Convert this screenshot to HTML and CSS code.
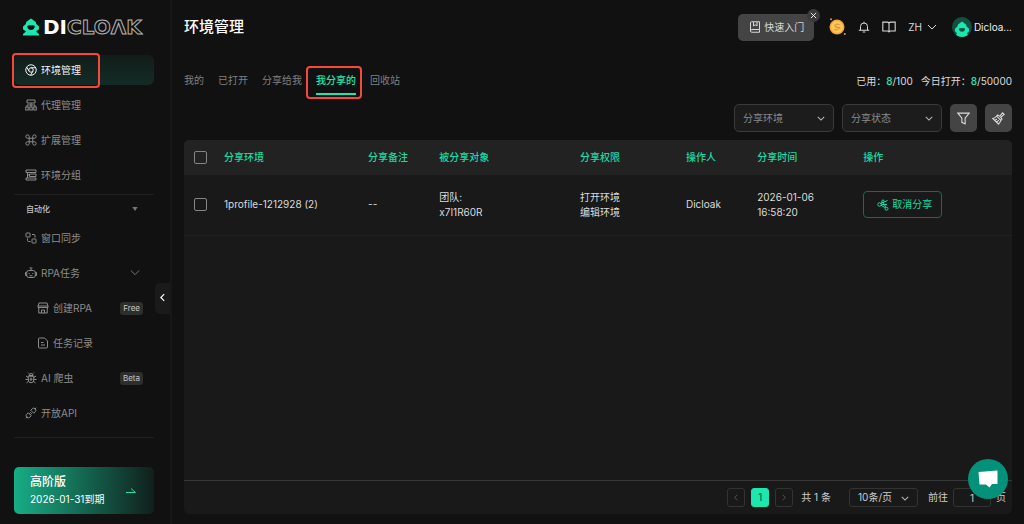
FILE: index.html
```html
<!DOCTYPE html>
<html lang="zh-CN">
<head>
    <meta charset="UTF-8">
    <meta name="viewport" content="width=device-width, initial-scale=1.0">
    <title>环境管理 - DICloak</title>
    <link rel="stylesheet" href="styles.css">
</head>
<body>
    <aside class="sidebar">
        <a href="#" class="logo">
            <svg class="logo-mark" viewBox="0 0 16 18">
                <path fill="#1be7ae" fill-rule="evenodd" d="M8 0.5 L12.8 4 L13.2 6 L16 8.5 V11.2 L13 13.6 L16 16 V17.5 H0 V16 L3 13.6 L0 11.2 V8.5 L2.8 6 L3.2 4 Z M4.2 8 C4.2 10.6 6 12 8 12 S11.8 10.6 11.8 8 C10.6 7 9.4 7.4 8 7.4 S5.4 7 4.2 8 Z"/>
            </svg>
            <span class="logo-text">DI<span class="logo-outline">CLOΛK</span></span>
        </a>

        <nav class="menu">
            <a href="#" class="menu-item active marked">
                <svg class="icon" viewBox="0 0 24 24"><circle cx="12" cy="12" r="10.5"/><circle cx="12" cy="12" r="4.5"/><path d="M12 7.5h9.5M8.2 14.5L3.4 6.2M15.8 14.5l-4.6 8"/></svg>
                环境管理
            </a>
            <a href="#" class="menu-item">
                <svg class="icon" viewBox="0 0 24 24"><path d="M4 2h16v6H4zM12 8v8M4 16v-4h16v4"/><rect x="1.5" y="16" width="5" height="6"/><rect x="9.5" y="16" width="5" height="6"/><rect x="17.5" y="16" width="5" height="6"/></svg>
                代理管理
            </a>
            <a href="#" class="menu-item">
                <svg class="icon" viewBox="0 0 24 24"><path d="M8.5 8.5h7v7h-7zM8.5 8.5V5A3.4 3.4 0 1 0 5 8.5zM15.5 8.5V5A3.4 3.4 0 1 1 19 8.5zM8.5 15.5V19A3.4 3.4 0 1 1 5 15.5zM15.5 15.5V19A3.4 3.4 0 1 0 19 15.5z"/></svg>
                扩展管理
            </a>
            <a href="#" class="menu-item">
                <svg class="icon" viewBox="0 0 24 24"><path d="M2 2h20v5H2zM9 10h13v5H9zM2 18h20v4H2zM5 7v11M5 12h4"/></svg>
                环境分组
            </a>
        </nav>

        <button type="button" class="section-title">
            自动化
            <svg class="caret" viewBox="0 0 8 6"><path d="M0 0h8L4 6z"/></svg>
        </button>

        <nav class="menu">
            <a href="#" class="menu-item">
                <svg class="icon" viewBox="0 0 24 24"><rect x="2" y="2" width="8" height="8" rx="1"/><rect x="14" y="14" width="8" height="8" rx="1"/><path d="M14 5h4q2 0 2 2v4M5 13v4q0 2 2 2h4"/></svg>
                窗口同步
            </a>
            <a href="#" class="menu-item">
                <svg class="icon" viewBox="0 0 24 24"><rect x="3.5" y="7" width="17" height="14" rx="4"/><path d="M12 7V2.5M9 2h6M3.5 11H1v6h2.5M20.5 11H23v6h-2.5M8.5 12v2M15.5 12v2M9 17.5h6"/></svg>
                RPA任务
                <svg class="chevron" viewBox="0 0 12 12"><path d="M1 3l5 5 5-5"/></svg>
            </a>
            <a href="#" class="menu-item sub">
                <svg class="icon" viewBox="0 0 24 24"><path d="M4 2h16l2 6v3H2V8zM3.5 11v11h17V11M2 8h20M9 22v-6h6v6"/></svg>
                创建RPA
                <span class="badge">Free</span>
            </a>
            <a href="#" class="menu-item sub">
                <svg class="icon" viewBox="0 0 24 24"><path d="M5 2h10l6 6v12q0 2-2 2H5q-2 0-2-2V4q0-2 2-2zM8 11h5M8 16h8"/></svg>
                任务记录
            </a>
            <a href="#" class="menu-item">
                <svg class="icon" viewBox="0 0 24 24"><path d="M8 7a4 4 0 0 1 8 0zM6.5 8.5h11V16a5.5 5.5 0 0 1-11 0zM12 11v7M9 14.5h6M6.5 11L2 8M17.5 11L22 8M6.5 15H1M17.5 15H23M7 18.5L3 22M17 18.5l4 3.5M8 3L6 1M16 3l2-2"/></svg>
                AI 爬虫
                <span class="badge">Beta</span>
            </a>
            <a href="#" class="menu-item">
                <svg class="icon" viewBox="0 0 24 24"><path d="M11.5 6.5l6 6 3-3a4.2 4.2 0 0 0-6-6zM19.5 4.5L22.5 1.5M12.5 17.5l-6-6-3 3a4.2 4.2 0 0 0 6 6zM4.5 19.5l-3 3M8.5 13.5l3-3M10.5 15.5l3-3"/></svg>
                开放API
            </a>
        </nav>

        <a href="#" class="plan">
            <span class="plan-info">
                <strong>高阶版</strong>
                <span>2026-01-31到期</span>
            </span>
            <svg class="plan-arrow" viewBox="0 0 10 8"><path d="M0 5.5h9.5L5 1.5"/></svg>
        </a>

        <button type="button" class="collapse" aria-label="收起">
            <svg viewBox="0 0 6 10"><path d="M5 1L1 5l4 4"/></svg>
        </button>
    </aside>

    <main class="main">
        <header class="topbar">
            <h1>环境管理</h1>
            <div class="tools">
                <div class="quick">
                    <button type="button" class="quick-btn">
                        <svg class="icon" viewBox="0 0 24 24"><path d="M21 17V1.5H5q-2 0-2 2V20q0 2.5 2.5 2.5H21V17H5.5Q3 17 3 20M9 2v8l3.5-2.5L16 10V2"/></svg>
                        快速入门
                    </button>
                    <button type="button" class="quick-close" aria-label="关闭">
                        <svg viewBox="0 0 8 8"><path d="M1 1l6 6M7 1L1 7"/></svg>
                    </button>
                </div>
                <svg class="coin" viewBox="0 0 18 18">
                    <circle cx="9" cy="9" r="7.5" fill="#f5a62c"/>
                    <circle cx="9" cy="9" r="6" fill="#ffc75a"/>
                    <path d="M11.5 6.5Q7 5.5 7 7.5T10.5 9.5T8 12L6.5 11.5" fill="none" stroke="#e8922a" stroke-width="1.2"/>
                    <circle cx="3" cy="1.2" r="1" fill="#e59a28"/><circle cx="16.8" cy="16" r="1" fill="#e59a28"/>
                </svg>
                <svg class="icon bell" viewBox="0 0 24 24"><path d="M5 18v-7a7 7 0 0 1 14 0v7M1.5 18.5h21M9.5 22h5M12 4V1.5"/></svg>
                <svg class="icon book" viewBox="0 0 26 22"><path d="M13 4Q12 2 10 2H1.5v16.5H10q2 0 3 1.5 1-1.5 3-1.5h8.5V2H16q-2 0-3 2zM13 4v16"/></svg>
                <button type="button" class="lang">
                    ZH
                    <svg viewBox="0 0 10 6"><path d="M1 1l4 4 4-4"/></svg>
                </button>
                <a href="#" class="user">
                    <svg class="avatar" viewBox="0 0 20 20">
                        <circle cx="10" cy="10" r="10" fill="#13503f"/>
                        <path fill="#1be7ae" fill-rule="evenodd" d="M10 4.5l4 3 .6 2 2.4 2.2v2.6L15 16.2l1 1.800Q13 20 10 20t-6-2l1-1.800-2-1.900v-2.600l2.400-2.200.6-2zM6.800 11.600q.5 3.200 3.200 3.200t3.200-3.200q-1.600-.6-3.200-.6t-3.200 .6z"/>
                    </svg>
                    Dicloa...
                </a>
            </div>
        </header>

        <div class="tabs-row">
            <nav class="tabs">
                <a href="#">我的</a>
                <a href="#">已打开</a>
                <a href="#">分享给我</a>
                <a href="#" class="active marked">我分享的</a>
                <a href="#">回收站</a>
            </nav>
            <div class="usage">
                <span>已用：<b>8</b>/100</span>
                <span>今日打开：<b>8</b>/50000</span>
            </div>
        </div>

        <div class="filters">
            <div class="select">
                <select aria-label="分享环境"><option>分享环境</option></select>
                <svg viewBox="0 0 10 6"><path d="M1 1l4 4 4-4"/></svg>
            </div>
            <div class="select">
                <select aria-label="分享状态"><option>分享状态</option></select>
                <svg viewBox="0 0 10 6"><path d="M1 1l4 4 4-4"/></svg>
            </div>
            <button type="button" class="square-btn" aria-label="筛选">
                <svg class="icon" viewBox="0 0 24 24"><path d="M1.5 2h21L15 11.5V22l-6-3v-7.5z"/></svg>
            </button>
            <button type="button" class="square-btn" aria-label="清空">
                <svg class="icon" viewBox="0 0 24 24"><path d="M14 8l5.5-6.5 3 3L16 10l2.5 3-2 2.5L8.5 7.5l2-2zM8.5 7.5Q6 11.5 1.5 12L12 22.5Q15 19 16.5 15.5M5 15.5l4-2.5M8.5 19l4-4"/></svg>
            </button>
        </div>

        <section class="panel">
            <table>
                <thead>
                    <tr>
                        <th class="col-check"><input type="checkbox" aria-label="全选"></th>
                        <th class="col-name">分享环境</th>
                        <th class="col-note">分享备注</th>
                        <th class="col-target">被分享对象</th>
                        <th class="col-rights">分享权限</th>
                        <th class="col-operator">操作人</th>
                        <th class="col-time">分享时间</th>
                        <th>操作</th>
                    </tr>
                </thead>
                <tbody>
                    <tr>
                        <td><input type="checkbox" aria-label="选择 1profile-1212928"></td>
                        <td>1profile-1212928 (2)</td>
                        <td>--</td>
                        <td>团队:<br>x7I1R60R</td>
                        <td>打开环境<br>编辑环境</td>
                        <td>Dicloak</td>
                        <td>2026-01-06<br>16:58:20</td>
                        <td>
                            <button type="button" class="cancel-btn">
                                <svg class="icon" viewBox="0 0 24 24"><circle cx="5" cy="11" r="3.5"/><circle cx="19" cy="19.5" r="3"/><circle cx="12" cy="4.5" r="2.5"/><path d="M8 12.5l8.5 5M7.5 9L21 3M20 11H9M10.500 6.500L7 9M12 7l6 10"/></svg>
                                取消分享
                            </button>
                        </td>
                    </tr>
                </tbody>
            </table>

            <footer class="pagination">
                <div class="pages">
                    <button type="button" class="page-btn" aria-label="上一页"><svg viewBox="0 0 6 10"><path d="M5 1L1 5l4 4"/></svg></button>
                    <button type="button" class="page-btn current">1</button>
                    <button type="button" class="page-btn" aria-label="下一页"><svg viewBox="0 0 6 10"><path d="M1 1l4 4-4 4"/></svg></button>
                </div>
                <span class="total">共 1 条</span>
                <div class="select page-size">
                    <select aria-label="每页条数"><option>10条/页</option></select>
                    <svg viewBox="0 0 10 6"><path d="M1 1l4 4 4-4"/></svg>
                </div>
                <label class="jump">前往 <input type="text" value="1"> 页</label>
            </footer>
        </section>
    </main>

    <button type="button" class="chat" aria-label="在线客服">
        <svg viewBox="0 0 20 18"><path d="M0.5 2L19.5 0.5V14H14l-2.5 3.5L8 14.5H1.5z"/></svg>
    </button>
</body>
</html>
```
FILE: styles.css
```css
* {
    box-sizing: border-box;
}

body {
    margin: 0;
    min-height: 100vh;
    display: flex;
    background: #111;
    color: #dcdcdc;
    font-family: Inter, "Noto Sans CJK SC", sans-serif;
    font-size: 10px;
    line-height: 15px;
}

a {
    color: inherit;
    text-decoration: none;
}

button, input, select {
    font: inherit;
    color: inherit;
}

button {
    padding: 0;
    border: none;
    background: none;
    cursor: pointer;
}

svg {
    flex: none;
    fill: none;
    stroke: currentColor;
}

.icon {
    width: 12px;
    height: 12px;
    stroke-width: 2;
}

/* sidebar */
.sidebar {
    position: relative;
    flex: none;
    width: 172px;
    padding: 17px 16px 10px 14px;
    border-right: 2px solid #171717;
    display: flex;
    flex-direction: column;
}

.logo {
    display: flex;
    align-items: center;
    gap: 4px;
    height: 20px;
    margin: 0 0 18px 9px;
}

.logo-mark {
    width: 16px;
    height: 18px;
    stroke: none;
}

.logo-text {
    font: bold 20px/20px "DejaVu Sans", sans-serif;
    color: #fff;
}

.logo-outline {
    color: #111;
    -webkit-text-stroke: 1px #b4b4b4;
}

.menu {
    display: flex;
    flex-direction: column;
    gap: 5px;
}

.menu-item {
    position: relative;
    display: flex;
    align-items: center;
    gap: 4px;
    height: 30px;
    padding: 0 11px;
    border-radius: 6px;
    color: #8c8c8c;
}

.menu-item.active {
    background: linear-gradient(#121d1a, #142c25);
    color: #f2f2f2;
}

.menu-item.sub {
    padding-left: 23px;
}

.menu-item .chevron {
    width: 10px;
    height: 10px;
    margin: 0 3px 0 auto;
}

/* red frames over the highlighted entries */
.marked::after {
    content: "";
    position: absolute;
    border: 2px solid #f5483f;
    border-radius: 4px;
    pointer-events: none;
}

.menu-item.marked::after {
    top: -2px;
    bottom: -3px;
    left: -2px;
    width: 84px;
}

.badge {
    margin-left: auto;
    padding: 0 3px;
    border-radius: 3px;
    background: #2e2e2e;
    color: #c4c4c4;
    font-size: 8px;
    line-height: 13px;
}

.section-title {
    display: flex;
    align-items: center;
    justify-content: space-between;
    height: 29px;
    margin-top: 4px;
    padding: 0 16px 0 12px;
    border-top: 1px solid #222;
    color: #c0c0c0;
    font-size: 8px;
    font-weight: 500;
}

.caret {
    width: 6px;
    height: 4px;
    fill: #777;
    stroke: none;
}

.menu:last-of-type {
    padding-bottom: 9px;
    border-bottom: 1px solid #222;
}

.plan {
    display: flex;
    align-items: center;
    justify-content: space-between;
    margin-top: auto;
    height: 47px;
    padding: 0 18px 0 16px;
    border-radius: 5px;
    background: linear-gradient(90deg, #17ad85, #111f1b);
    color: #fff;
}

.plan-info {
    display: flex;
    flex-direction: column;
    gap: 3px;
}

.plan-info strong {
    font-size: 12px;
    font-weight: 500;
}

.plan-arrow {
    width: 10px;
    height: 8px;
    color: #1be7ae;
}

.collapse {
    position: absolute;
    top: 283px;
    right: 0;
    width: 15px;
    height: 31px;
    border-radius: 5px 0 0 5px;
    background: #1a1a1a;
    color: #fff;
}

.collapse svg {
    width: 5px;
    height: 9px;
    stroke-width: 1.4;
}

/* main area */
.main {
    flex: 1;
    min-width: 0;
    padding: 13px 12px 10px 12px;
    display: flex;
    flex-direction: column;
}

.topbar {
    display: flex;
    align-items: center;
    justify-content: space-between;
    height: 28px;
}

h1 {
    margin: 0;
    color: #fff;
    font-size: 15px;
    font-weight: 500;
    line-height: 20px;
}

.tools {
    display: flex;
    align-items: center;
    gap: 12px;
    color: #d8d8d8;
}

.quick {
    position: relative;
}

.quick-btn {
    display: flex;
    align-items: center;
    gap: 3px;
    height: 27px;
    padding: 0 10px 0 11px;
    border-radius: 5px;
    background: #444;
}

.quick-close {
    position: absolute;
    top: -5px;
    right: -6px;
    display: flex;
    align-items: center;
    justify-content: center;
    width: 13px;
    height: 13px;
    border-radius: 50%;
    background: #3a3a3a;
    color: #fff;
}

.quick-close svg {
    width: 7px;
    height: 7px;
}

.coin {
    width: 18px;
    height: 18px;
    margin-left: 2px;
    stroke: none;
}

.book {
    width: 14px;
    height: 12px;
}

.lang {
    display: flex;
    align-items: center;
    gap: 5px;
}

.lang svg {
    width: 10px;
    height: 6px;
}

.user {
    display: flex;
    align-items: center;
    gap: 2px;
    margin-left: 3px;
    color: #eee;
}

.avatar {
    width: 20px;
    height: 20px;
    stroke: none;
}

.tabs-row {
    display: flex;
    align-items: center;
    justify-content: space-between;
    height: 30px;
    margin-top: 25px;
}

.tabs {
    display: flex;
    gap: 14px;
    color: #808080;
}

.tabs a {
    position: relative;
    padding: 5px 0;
    border-bottom: 2px solid transparent;
}

.tabs .active {
    border-color: #1be7ae;
    color: #1be7ae;
    font-weight: 500;
}

.tabs .marked::after {
    top: -2px;
    bottom: -6px;
    left: -10px;
    right: -6px;
}

.usage {
    display: flex;
    gap: 8px;
}

.usage b {
    color: #1be7ae;
    font-weight: 500;
}

.filters {
    display: flex;
    justify-content: flex-end;
    gap: 8px;
    margin: 8px 0;
}

.select {
    position: relative;
    width: 100px;
    height: 28px;
    color: #8a8a8a;
}

.select select {
    width: 100%;
    height: 100%;
    padding: 0 8px;
    border: 1px solid #3a3a3a;
    border-radius: 5px;
    background: #1c1c1c;
    appearance: none;
}

.select svg {
    position: absolute;
    top: 50%;
    right: 9px;
    width: 8px;
    height: 5px;
    margin-top: -2px;
    color: #bbb;
    stroke-width: 1.3;
    pointer-events: none;
}

.square-btn {
    display: flex;
    align-items: center;
    justify-content: center;
    width: 27px;
    height: 28px;
    border-radius: 5px;
    background: #444;
}

.square-btn .icon {
    width: 13px;
    height: 13px;
}

.panel {
    flex: 1;
    display: flex;
    flex-direction: column;
    border-radius: 5px;
    background: #191919;
    overflow: hidden;
}

table {
    width: 100%;
    border-collapse: collapse;
    table-layout: fixed;
}

th, td {
    padding: 0 10px;
    text-align: left;
    font-weight: 400;
}

thead tr {
    height: 35px;
    background: #222;
    color: #1bd9a4;
}

th {
    font-weight: 500;
}

tbody tr {
    height: 60px;
    border-bottom: 1px solid #202020;
}

th:first-child, td:first-child {
    padding-right: 0;
}

.col-check { width: 30px; }
.col-name { width: 17.4%; }
.col-note { width: 8.6%; }
.col-target { width: 17%; }
.col-rights { width: 12.8%; }
.col-operator { width: 8.6%; }
.col-time { width: 12.8%; }

input[type="checkbox"] {
    display: block;
    width: 13px;
    height: 13px;
    margin: 0;
    border: 1px solid #858585;
    border-radius: 2px;
    appearance: none;
}

.cancel-btn {
    display: flex;
    align-items: center;
    gap: 3px;
    height: 27px;
    padding: 0 9px 0 13px;
    border: 1px solid #156b53;
    border-radius: 4px;
    color: #1bd9a4;
    white-space: nowrap;
}

.pagination {
    display: flex;
    align-items: center;
    justify-content: flex-end;
    height: 34px;
    margin-top: auto;
    padding-right: 6px;
    border-top: 1px solid #363636;
    color: #ccc;
}

.pages {
    display: flex;
    gap: 6px;
}

.page-btn {
    display: flex;
    align-items: center;
    justify-content: center;
    width: 18px;
    height: 19px;
    border: 1px solid #333;
    border-radius: 3px;
    color: #777;
}

.page-btn svg {
    width: 4px;
    height: 7px;
}

.page-btn.current {
    border-color: #1be7ae;
    background: #1be7ae;
    color: #14473a;
}

.total {
    margin: 0 18px 0 8px;
}

.page-size {
    width: 69px;
    height: 19px;
    margin-right: 10px;
    color: #ccc;
}

.page-size select, .jump input {
    border: 1px solid #333;
    border-radius: 3px;
    background: transparent;
}

.jump {
    display: flex;
    align-items: center;
    gap: 5px;
}

.jump input {
    width: 38px;
    height: 19px;
    padding: 0;
    text-align: center;
}

/* support chat bubble */
.chat {
    position: fixed;
    right: 16px;
    bottom: 25px;
    display: flex;
    align-items: center;
    justify-content: center;
    width: 40px;
    height: 40px;
    border-radius: 50%;
    background: #04917a;
}

.chat svg {
    width: 20px;
    height: 18px;
    fill: #fff;
    stroke: none;
}
```
